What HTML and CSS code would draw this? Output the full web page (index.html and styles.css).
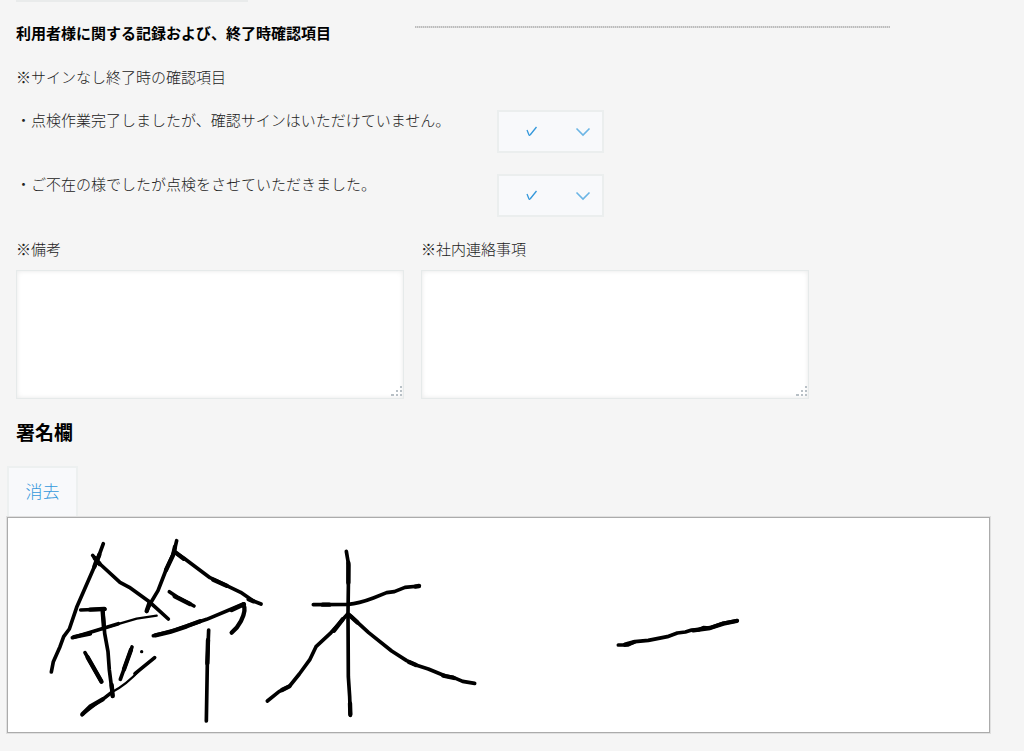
FILE: index.html
```
<!DOCTYPE html>
<html lang="ja">
<head>
<meta charset="utf-8">
<meta name="viewport" content="width=device-width, initial-scale=1">
<title>終了時確認項目</title>
<link rel="stylesheet" href="styles.css">
</head>
<body>
<main class="page">
  <div class="previous-edge"></div>
  <header class="section-head">
    <h2 class="section-title">利用者様に関する記録および、終了時確認項目</h2>
    <hr class="divider">
  </header>
  <p class="note">※サインなし終了時の確認項目</p>
  <div class="check-row">
    <label class="check-label" for="unsigned">・点検作業完了しましたが、確認サインはいただけていません。</label>
    <div class="select-wrap">
      <select class="select" id="unsigned"><option>✓</option></select>
      <svg class="select-icons" viewBox="0 0 107 43" aria-hidden="true"><path class="tick" d="M30 20 32 25Q32.5 26 33.5 24.5L39.500 17"/><path class="arrow" d="M79.500 18.500 86 25 92.500 18.500"/></svg>
    </div>
  </div>
  <div class="check-row">
    <label class="check-label" for="absent">・ご不在の様でしたが点検をさせていただきました。</label>
    <div class="select-wrap">
      <select class="select" id="absent"><option>✓</option></select>
      <svg class="select-icons" viewBox="0 0 107 43" aria-hidden="true"><path class="tick" d="M30 20 32 25Q32.5 26 33.5 24.5L39.500 17"/><path class="arrow" d="M79.500 18.500 86 25 92.500 18.500"/></svg>
    </div>
  </div>
  <div class="notes">
    <div class="field">
      <label class="field-label" for="remarks">※備考</label>
      <div class="area-wrap">
        <textarea class="area" id="remarks"></textarea>
        <svg class="grip" viewBox="0 0 12 11" aria-hidden="true"><path d="M9 0h2v2H9zM5 4h2v2H5zM9 4h2v2H9zM0 8h3v2H0zM5 8h2v2H5zM9 8h2v2H9z"/></svg>
      </div>
    </div>
    <div class="field">
      <label class="field-label" for="internal">※社内連絡事項</label>
      <div class="area-wrap">
        <textarea class="area" id="internal"></textarea>
        <svg class="grip" viewBox="0 0 12 11" aria-hidden="true"><path d="M9 0h2v2H9zM5 4h2v2H5zM9 4h2v2H9zM0 8h3v2H0zM5 8h2v2H5zM9 8h2v2H9z"/></svg>
      </div>
    </div>
  </div>
  <h3 class="sign-title">署名欄</h3>
  <section class="sign">
    <button class="clear" type="button">消去</button>
    <div class="pad">
      <svg class="ink" width="760" height="214" viewBox="0 0 760 214" role="img" aria-label="署名">
        <g transform="translate(32 12) scale(.33333)">
          <path d="M190 41 172 90 110 232 88 297 71 320 60 350 40 395 34 426"/>
          <path d="M158 76 180 102 240 157 268 172 325 213 350 235 385 267"/>
          <path class="bold" d="M164 84 179 102M178 74 168 100M171 88 163 110"/>
          <path d="M122 240 195 237"/><path class="bold" d="M150 239 193 237"/>
          <path d="M188 238 194 310 204 365 208 420 218 498"/><path class="bold" d="M188 244 192 296M215 465 218 498"/>
          <path class="thin" d="M97 323 190 295 290 266 350 257"/><path class="bold" d="M102 321 150 311"/><path d="M97 323 235 281"/>
          <path d="M135 368 185 456"/><path class="bold" d="M143 382 184 454"/>
          <path d="M276 351 241 448"/><path class="bold" d="M273 359 252 418"/>
          <circle cx="305" cy="365" r="5"/>
          <path class="thin" d="M125 556 215 487Q260 463 300 419L344 383"/><path class="bold" d="M127 553 150 530 188 508"/><path d="M188 508 215 487M285 431 344 383"/>
          <path d="M410 32 402 66 378 120 354 182 330 222 320 244"/><path class="bold" d="M405 50 399 76 378 120M328 220 320 243"/>
          <path d="M402 65 432 85 510 143 602 187 640 213 663 222"/><path class="bold" d="M405 66 431 86M520 149 560 167M626 208 640 214"/>
          <path d="M388 185 415 203 462 228"/><path class="bold" d="M404 199 450 222"/>
          <path d="M340 317 405 300 500 268 610 222"/><path class="bold" d="M346 316 390 306 440 289 480 274M575 240 612 223"/>
          <path class="bold" d="M610 224Q620 240 603 273 593 293 575 308"/>
          <path d="M506 300 502 400 499 573"/><path class="bold" d="M504 330 502 400"/>
        </g>
        <g transform="translate(242 12) scale(.33333)">
          <path d="M289 64 296 105 294 250 295 440 299 500 301 556"/><path class="bold" d="M295 98 295 158M300 520 301 553"/>
          <path d="M190 224 295 223Q325 221 370 204L410 188 433 185 465 172 508 168"/><path class="bold" d="M218 224 238 224M496 170 507 168"/>
          <path d="M293 252 240 311 198 350 180 388 148 432 119 468 87 485 52 513"/><path class="bold" d="M278 268 252 302M118 469 96 480"/>
          <path d="M297 253 320 275 356 308 425 363 470 392 500 406 535 417 586 438 610 442 638 454 674 460"/><path class="bold" d="M303 260 322 277M477 396 498 405M580 437 612 444"/>
        </g>
        <g transform="translate(592 82) scale(.33333)">
          <path d="M55 135 83 135 105 125 145 121 202 110 232 99 256 96 275 90 295 90 310 83 330 84 370 70 412 62"/><path class="bold" d="M75 134 102 126M280 91 330 84 370 71 410 63"/>
        </g>
      </svg>
    </div>
  </section>
</main>
</body>
</html>
```
FILE: styles.css
```
* { box-sizing: border-box; }
body {
  margin: 0;
  background: #f5f5f5;
  color: #222;
  font: 300 15px/22px "Noto Sans CJK JP", sans-serif;
}
.page { padding: 0 34px 18px 7px; }
.previous-edge {
  width: 232px;
  height: 2px;
  margin-left: 9px;
  background: #e9ebeb;
}
.section-head {
  display: flex;
  align-items: flex-start;
  justify-content: space-between;
  margin: 20px 100px 22px 9px;
}
.section-title {
  margin: 0;
  color: #000;
  font-size: 15px;
  font-weight: 700;
}
.divider {
  flex: 0 1 475px;
  height: 2px;
  margin: 4px 0 0;
  border: 0;
  background: repeating-linear-gradient(90deg, #bcbcbc 0 1px, #dadada 1px 2px);
}
.note { margin: 0 9px 22px; }
.check-row {
  display: grid;
  grid-template-columns: 481px 107px;
  align-items: start;
  margin: 0 9px 21px;
}
.check-label { line-height: 20px; }
.select-wrap, .area-wrap { position: relative; }
.select {
  display: block;
  width: 100%;
  height: 43px;
  padding: 0 28px;
  appearance: none;
  border: 2px solid #ebeeee;
  border-radius: 0;
  background: #f8f9fb;
  color: transparent;
  font: inherit;
}
.select option { color: #3498db; }
.select-icons {
  position: absolute;
  inset: 0;
  width: 107px;
  height: 43px;
  fill: none;
  pointer-events: none;
}
.tick { stroke: #3498db; stroke-width: 1.3; }
.arrow { stroke: #6bb5e5; stroke-width: 1.6; }
.notes {
  display: grid;
  grid-template-columns: repeat(2, 388px);
  column-gap: 17px;
  margin: 0 9px;
}
.field-label { display: block; margin-bottom: 10px; }
.area {
  display: block;
  width: 100%;
  height: 129px;
  padding: 8px;
  border: 1px solid #e6eaea;
  border-radius: 0;
  background: #fff;
  box-shadow: inset 0 0 5px #e8e8e8;
  color: #444;
  font: inherit;
  resize: none;
}
.grip {
  position: absolute;
  right: 1px;
  bottom: 2px;
  width: 12px;
  height: 11px;
  fill: #b8c0c6;
}
.sign-title {
  margin: 19px 9px 20px;
  color: #000;
  font-size: 19px;
  font-weight: 700;
  line-height: 28px;
}
.clear {
  display: block;
  min-width: 71px;
  padding: 8px 16px 11px;
  border: 2px solid #edf0f0;
  border-bottom-width: 1px;
  background: #f8f9fb;
  color: #3498db;
  font: inherit;
  font-size: 17px;
  line-height: 29px;
}
.pad {
  overflow: hidden;
  border: 1px solid #ababab;
  outline: 1px solid #e0e0e0;
  background: #fff;
}
.ink {
  display: block;
  fill: none;
  stroke: #000;
  stroke-width: 11;
  stroke-linecap: round;
  stroke-linejoin: round;
}
.ink circle { fill: #000; stroke: none; }
.ink .bold { stroke-width: 13; }
.ink .thin { stroke-width: 7; }
```
